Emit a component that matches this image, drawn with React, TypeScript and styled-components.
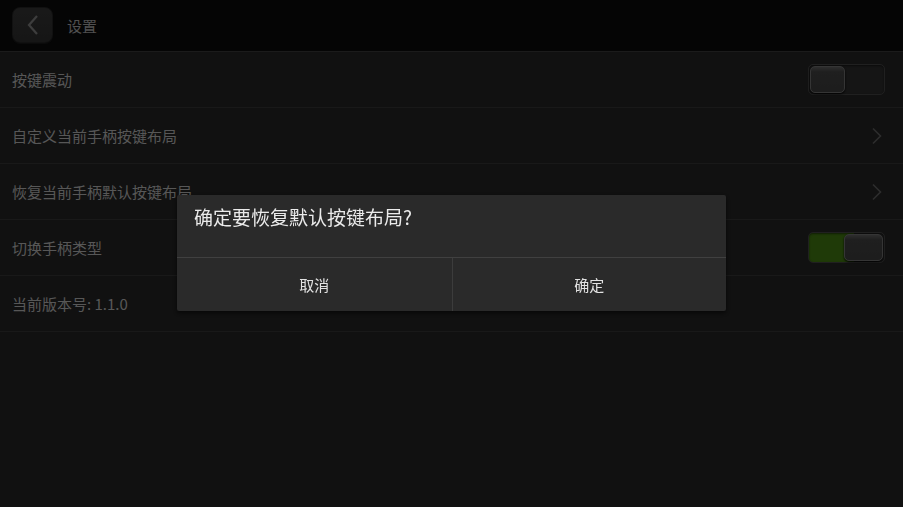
import styled, { createGlobalStyle } from "styled-components"

const GlobalStyle = createGlobalStyle`
    html, body {
        margin: 0;
        padding: 0;
        background: #222222;
    }
    body {
        font-family: "Noto Sans CJK SC", "Noto Sans", sans-serif;
    }
`

const rows = [
    { label: "按键震动", kind: "toggle", on: false },
    { label: "自定义当前手柄按键布局", kind: "arrow" },
    { label: "恢复当前手柄默认按键布局", kind: "arrow" },
    { label: "切换手柄类型", kind: "toggle", on: true },
    { label: "当前版本号: 1.1.0", kind: "text" },
]

const App = () => {
  return (
    <>
        <GlobalStyle />
        <Screen>
            <Header>
                <BackButton>
                    <svg width="14" height="22" viewBox="0 0 14 22">
                        <path d="M11 2 L3 11 L11 20" fill="none" stroke="#7a7a7a" strokeWidth="2.2" />
                    </svg>
                </BackButton>
                <HeaderTitle>设置</HeaderTitle>
            </Header>
            <List>
                {rows.map((row) => (
                    <Row key={row.label}>
                        <RowLabel>{row.label}</RowLabel>
                        {row.kind === "toggle" && (
                            <Toggle $on={!!row.on}>
                                <Thumb $on={!!row.on} />
                            </Toggle>
                        )}
                        {row.kind === "arrow" && (
                            <svg width="12" height="18" viewBox="0 0 12 18">
                                <path d="M2 1.5 L9.5 9 L2 16.5" fill="none" stroke="#5a5a5a" strokeWidth="1.6" />
                            </svg>
                        )}
                    </Row>
                ))}
            </List>
        </Screen>
        <Overlay>
            <Dialog>
                <DialogTitle>确定要恢复默认按键布局?</DialogTitle>
                <DialogButtons>
                    <DialogButton>取消</DialogButton>
                    <DialogButton>确定</DialogButton>
                </DialogButtons>
            </Dialog>
        </Overlay>
    </>
  )
}

export default App

const Screen = styled.div`
    width: 903px;
    height: 507px;
    display: flex;
    flex-direction: column;
    background: #222222;
    overflow: hidden;
`

const Header = styled.header`
    display: flex;
    align-items: center;
    gap: 14px;
    height: 51px;
    padding-left: 12px;
    background: #0a0a0a;
    border-bottom: 1px solid #363636;
    flex-shrink: 0;
`

const BackButton = styled.button`
    display: flex;
    align-items: center;
    justify-content: center;
    width: 41px;
    height: 36px;
    margin-top: -2px;
    padding: 0;
    background: linear-gradient(#333333, #2c2c2c);
    border: 1px solid #222222;
    border-radius: 8px;
    box-shadow: 0 1px 0 #161616;
`

const HeaderTitle = styled.span`
    color: #a0a0a0;
    font-size: 15px;
`

const List = styled.div`
    display: flex;
    flex-direction: column;
`

const Row = styled.div`
    display: flex;
    align-items: center;
    justify-content: space-between;
    height: 55px;
    padding: 0 20px 0 12px;
    border-bottom: 1px solid #333333;
`

const RowLabel = styled.span`
    color: #aeaeae;
    font-size: 15px;
`

const Toggle = styled.div<{ $on: boolean }>`
    display: flex;
    justify-content: ${(p) => (p.$on ? "flex-end" : "flex-start")};
    align-items: center;
    width: 77px;
    height: 31px;
    margin-right: -2px;
    box-sizing: border-box;
    padding: 1px;
    border-radius: 5px;
    border: 1px solid #404040;
    background: ${(p) =>
        p.$on
            ? "linear-gradient(90deg, #3e7410 0%, #3e7410 60%, #2c2c2c 60%)"
            : "#2a2a2a"};
    box-shadow: inset 0 1px 2px rgba(0, 0, 0, 0.5);
`

const Thumb = styled.div<{ $on: boolean }>`
    width: ${(p) => (p.$on ? "39px" : "35px")};
    height: 27px;
    border-radius: 5px;
    background: linear-gradient(#5c5c5c, #3e3e3e 20%, #3a3a3a);
    border: 1px solid #6a6a6a;
    box-sizing: border-box;
    box-shadow: 0 1px 2px #000;
`

const Overlay = styled.div`
    position: fixed;
    inset: 0;
    display: flex;
    align-items: center;
    justify-content: center;
    background: rgba(0, 0, 0, 0.5);
`

const Dialog = styled.div`
    width: 549px;
    margin-top: -1px;
    background: #2a2a2a;
    border-radius: 2px;
    box-shadow: 0 2px 4px rgba(0, 0, 0, 0.6);
    display: flex;
    flex-direction: column;
`

const DialogTitle = styled.div`
    height: 63px;
    box-sizing: border-box;
    padding: 8px 0 0 17px;
    color: #ebebeb;
    font-size: 19px;
    border-bottom: 1px solid #404040;
`

const DialogButtons = styled.div`
    display: grid;
    grid-template-columns: 1fr 1fr;
    height: 53px;
`

const DialogButton = styled.button`
    display: flex;
    align-items: center;
    justify-content: center;
    padding: 0;
    background: transparent;
    border: none;
    color: #e2e2e2;
    font-family: inherit;
    font-size: 15px;

    & + & {
        border-left: 1px solid #3c3c3c;
    }
`
